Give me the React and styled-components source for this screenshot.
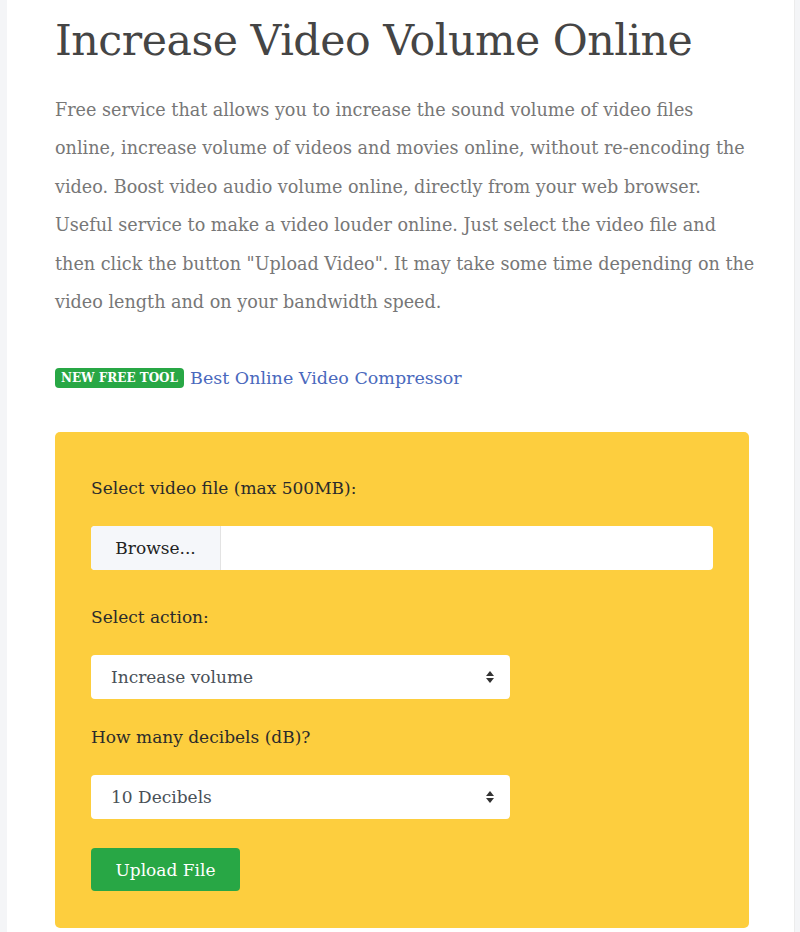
import React from "react";
import styled, { createGlobalStyle } from "styled-components";

const GlobalStyle = createGlobalStyle`
  html, body {
    margin: 0;
    padding: 0;
    background: #f4f5f7;
  }
  body {
    font-family: "DejaVu Serif", "Liberation Serif", serif;
  }
`;

const Arrows = () => (
  <svg width="10" height="14" viewBox="0 0 10 14">
    <path d="M5 1 L9 6 H1 Z" fill="#333" />
    <path d="M5 13 L9 8 H1 Z" fill="#333" />
  </svg>
);

const SelectField = ({ value, options }) => (
  <SelectWrap>
    <Select defaultValue={value}>
      {options.map((o) => (
        <option key={o}>{o}</option>
      ))}
    </Select>
    <ArrowHolder>
      <Arrows />
    </ArrowHolder>
  </SelectWrap>
);

const App = () => {
  return (
    <>
      <GlobalStyle />
      <Page>
        <Content>
          <Title>Increase Video Volume Online</Title>
          <Intro>
            Free service that allows you to increase the sound volume of video
            files online, increase volume of videos and movies online, without
            re-encoding the video. Boost video audio volume online, directly
            from your web browser. Useful service to make a video louder
            online. Just select the video file and then click the button
            "Upload Video". It may take some time depending on the video length
            and on your bandwidth speed.
          </Intro>
          <Promo>
            <Badge>NEW FREE TOOL</Badge>
            <PromoLink href="#">Best Online Video Compressor</PromoLink>
          </Promo>

          <FormBox>
            <Label>Select video file (max 500MB):</Label>
            <FileInput $after={33}>
              <Browse>Browse...</Browse>
              <FileName />
            </FileInput>

            <Label>Select action:</Label>
            <Group $after={24}>
              <SelectField
                value="Increase volume"
                options={["Increase volume", "Decrease volume"]}
              />
            </Group>

            <Label>How many decibels (dB)?</Label>
            <Group $after={29}>
              <SelectField
                value="10 Decibels"
                options={["5 Decibels", "10 Decibels", "15 Decibels", "20 Decibels"]}
              />
            </Group>

            <UploadButton>Upload File</UploadButton>
          </FormBox>
        </Content>
      </Page>
    </>
  );
};

export default App;

const Page = styled.div`
  margin-left: 7px;
  width: 788px;
  min-height: 932px;
  background: #ffffff;
  border-right: 1px solid #ececec;
  box-sizing: border-box;
`;

const Content = styled.div`
  padding: 10px 0 0 48px;
  width: 694px;
`;

const Title = styled.h1`
  margin: 0;
  font-family: "DejaVu Serif", serif;
  font-weight: 400;
  font-size: 42.7px;
  line-height: 60px;
  color: #454545;
  letter-spacing: -0.5px;
`;

const Intro = styled.p`
  margin: 21px -8px 0 0;
  font-size: 17.6px;
  line-height: 38.4px;
  color: #777777;
`;

const Promo = styled.div`
  margin-top: 42px;
  display: flex;
  align-items: center;
  gap: 6px;
  height: 30px;
`;

const Badge = styled.span`
  background: #28a745;
  color: #ffffff;
  font-size: 12px;
  font-weight: 700;
  height: 20px;
  line-height: 20px;
  padding: 0 6px;
  border-radius: 4px;
`;

const PromoLink = styled.a`
  color: #4a69bd;
  font-size: 17.5px;
  text-decoration: none;
`;

const FormBox = styled.div`
  margin-top: 39px;
  background: #fdce3e;
  border-radius: 5px;
  padding: 42px 36px 37px;
`;

const Label = styled.div`
  font-size: 17px;
  line-height: 29px;
  color: #2b2b2b;
  margin-bottom: 23px;
`;

const FileInput = styled.div`
  display: flex;
  height: 44px;
  background: #ffffff;
  border-radius: 4px;
  overflow: hidden;
  margin-bottom: ${(p) => p.$after}px;
`;

const Browse = styled.div`
  width: 129px;
  background: #f5f7fa;
  border-right: 1px solid #e3e3e3;
  display: flex;
  align-items: center;
  justify-content: center;
  font-size: 17px;
  color: #222222;
`;

const FileName = styled.div`
  flex: 1;
`;

const Group = styled.div`
  margin-bottom: ${(p) => p.$after}px;
`;

const SelectWrap = styled.div`
  position: relative;
  width: 419px;
`;

const Select = styled.select`
  appearance: none;
  -webkit-appearance: none;
  width: 100%;
  height: 44px;
  border: none;
  border-radius: 4px;
  background: #ffffff;
  padding: 0 20px;
  font-family: "DejaVu Serif", serif;
  font-size: 17px;
  color: #495057;
  outline: none;
`;

const ArrowHolder = styled.span`
  position: absolute;
  right: 15px;
  top: 50%;
  transform: translateY(-50%);
  display: flex;
  pointer-events: none;
`;

const UploadButton = styled.button`
  width: 149px;
  height: 43px;
  border: none;
  border-radius: 4px;
  background: #28a745;
  color: #ffffff;
  font-family: "DejaVu Serif", serif;
  font-size: 17px;
  cursor: pointer;
`;
